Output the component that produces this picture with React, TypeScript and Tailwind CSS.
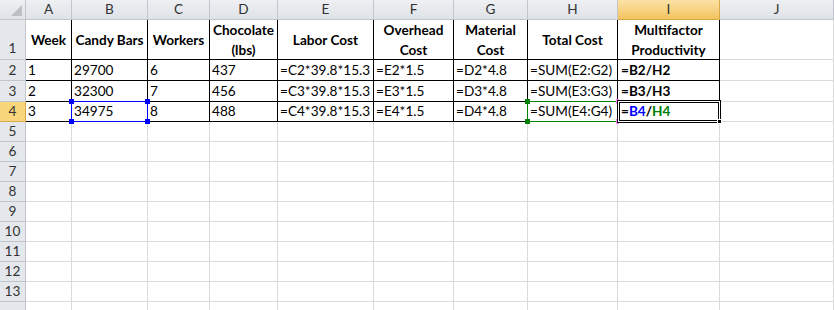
const cols = ["A", "B", "C", "D", "E", "F", "G", "H", "I", "J"]

const headers = ["Week", "Candy Bars", "Workers", "Chocolate (lbs)", "Labor Cost", "Overhead Cost", "Material Cost", "Total Cost", "Multifactor Productivity"]

const data = [
  ["1", "29700", "6", "437", "=C2*39.8*15.3", "=E2*1.5", "=D2*4.8", "=SUM(E2:G2)", "=B2/H2"],
  ["2", "32300", "7", "456", "=C3*39.8*15.3", "=E3*1.5", "=D3*4.8", "=SUM(E3:G3)", "=B3/H3"],
  ["3", "34975", "8", "488", "=C4*39.8*15.3", "=E4*1.5", "=D4*4.8", "=SUM(E4:G4)", ""],
]

const emptyRows = [5, 6, 7, 8, 9, 10, 11, 12, 13]

function Square({ className }: { className: string }) {
  return <div className={"absolute h-[5px] w-[5px] " + className} />
}

export default function App() {
  return (
    <div className="relative h-[310px] w-[834px] overflow-hidden bg-white text-[13.6px] text-black [font-family:Lato,sans-serif]">
      <div className="grid grid-cols-[26px_46px_76px_62px_68px_96px_80px_74px_90px_102px_1fr] grid-rows-[20px_40px_21px_21px_20px_repeat(10,20px)]">
        {/* column headers */}
        <div className="flex items-end justify-end border-b border-r border-[#c2c6cc] bg-gradient-to-b from-[#eef0f3] to-[#dfe2e7] p-[3px]">
          <svg width="11" height="11" viewBox="0 0 11 11">
            <polygon points="11,0 11,11 0,11" fill="#bcc0c6" />
          </svg>
        </div>
        {cols.map((c) =>
          c === "I" ? (
            <div key={c} className="flex items-center justify-center border-b border-r border-[#d9a94a] bg-gradient-to-b from-[#fbe2a4] to-[#f2c35e] text-[#333]">
              {c}
            </div>
          ) : (
            <div key={c} className="flex items-center justify-center border-b border-r border-[#c2c6cc] bg-gradient-to-b from-[#eef0f3] to-[#dfe2e7] text-[#333]">
              {c}
            </div>
          )
        )}

        {/* row 1 */}
        <div className="flex items-end justify-center border-b border-r border-[#c2c6cc] bg-[#e4e7eb] pb-[1px] text-[#333]">1</div>
        {headers.map((h) => (
          <div key={h} className="flex items-center justify-center border-b border-r border-black text-center font-bold leading-[20px]">
            {h === "Candy Bars" ? <span className="whitespace-nowrap">{h}</span> : h}
          </div>
        ))}
        <div className="border-b border-r border-[#dadada]" />

        {/* data rows */}
        {data.map((row, i) => (
          <>
            <div
              key={"h" + i}
              className={
                i === 2
                  ? "flex items-center justify-center border-b border-r border-[#d9a94a] bg-[#f7d67c] text-[#333]"
                  : "flex items-center justify-center border-b border-r border-[#c2c6cc] bg-[#e4e7eb] text-[#333]"
              }
            >
              {i + 2}
            </div>
            {row.map((v, j) => (
              <div key={i + "-" + j} className={j === 8 ? "flex items-center whitespace-nowrap border-b border-r border-black pl-[3px] font-bold" : "flex items-center whitespace-nowrap border-b border-r border-black pl-[2px]"}>
                {i === 2 && j === 8 ? (
                  <span>
                    =<span className="text-[#0000ff]">B4</span>/<span className="text-[#008000]">H4</span>
                  </span>
                ) : (
                  v
                )}
              </div>
            ))}
            <div key={"j" + i} className="border-b border-r border-[#dadada]" />
          </>
        ))}

        {/* empty rows */}
        {emptyRows.map((r) => (
          <>
            <div key={"h" + r} className="flex items-center justify-center border-b border-r border-[#c2c6cc] bg-[#e4e7eb] text-[#333]">
              {r}
            </div>
            {cols.map((c) => (
              <div key={c + r} className="border-b border-r border-[#dadada]" />
            ))}
          </>
        ))}
        <div className="border-r border-[#c2c6cc] bg-[#e4e7eb]" />
        {cols.map((c) => (
          <div key={c + "14"} className="border-r border-[#dadada]" />
        ))}
      </div>

      {/* B4 reference highlight */}
      <div className="absolute left-[71px] top-[101px] h-[21px] w-[77px] border border-[#0000ff]" />
      <Square className="left-[69px] top-[99px] bg-[#0000ff]" />
      <Square className="left-[145px] top-[99px] bg-[#0000ff]" />
      <Square className="left-[69px] top-[119px] bg-[#0000ff]" />
      <Square className="left-[145px] top-[119px] bg-[#0000ff]" />

      {/* H4 reference highlight */}
      <div className="absolute left-[527px] top-[101px] h-[21px] w-[91px] border border-[#008000]" />
      <Square className="left-[525px] top-[99px] bg-[#008000]" />
      <Square className="left-[525px] top-[119px] bg-[#008000]" />
      <div className="absolute left-[616px] top-[99px] h-[5px] w-[3px] bg-[#ff80ff]" />
      <div className="absolute left-[616px] top-[119px] h-[5px] w-[3px] bg-[#ff80ff]" />

      {/* active cell I4 */}
      <div className="absolute left-[617px] top-[100px] h-[23px] w-[104px] border border-black">
        <div className="h-full w-full border border-white">
          <div className="h-full w-full border border-black" />
        </div>
      </div>
      <div className="absolute left-[717px] top-[119px] h-[5px] w-[5px] border border-white bg-black" />
    </div>
  )
}
